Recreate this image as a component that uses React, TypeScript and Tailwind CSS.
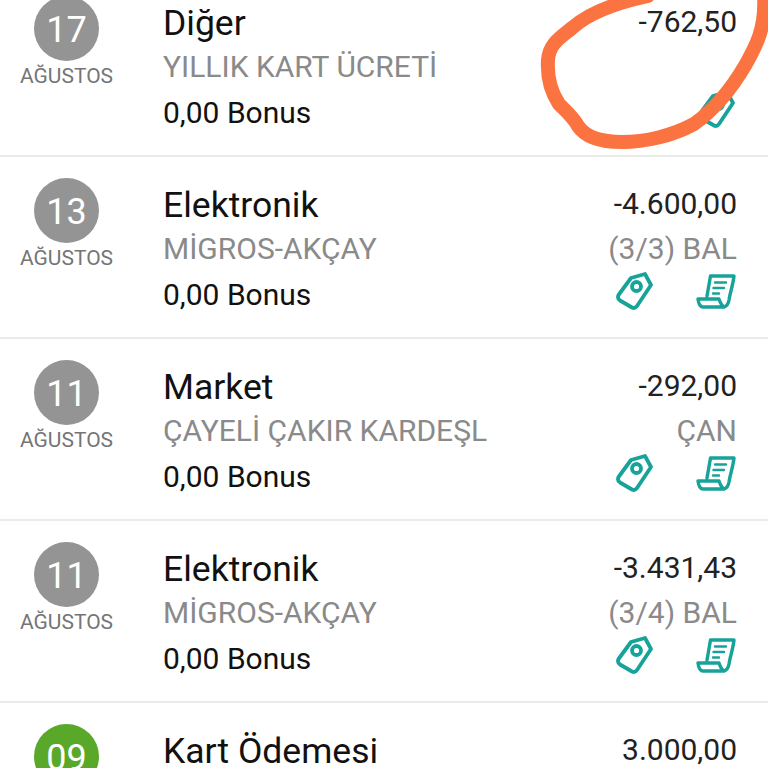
const rows = [
  { d: "17", title: "Diğer", sub: "YILLIK KART ÜCRETİ", amt: "-762,50", note: "", receipt: false },
  { d: "13", title: "Elektronik", sub: "MİGROS-AKÇAY", amt: "-4.600,00", note: "(3/3) BAL", receipt: true },
  { d: "11", title: "Market", sub: "ÇAYELİ ÇAKIR KARDEŞL", amt: "-292,00", note: "ÇAN", receipt: true },
  { d: "11", title: "Elektronik", sub: "MİGROS-AKÇAY", amt: "-3.431,43", note: "(3/4) BAL", receipt: true },
];

function Tag() {
  return (
    <svg width="38" height="40" viewBox="0 0 38 40" fill="none" stroke="#17a399" strokeWidth="3.8" strokeLinejoin="round" strokeLinecap="round">
      <path d="M2.500 24 L15 7 L29 3 L35 14 L21 35 Q19 38 16 36.500 L4 29.500 Q1 27.500 2.500 24 Z" />
      <circle cx="20.500" cy="15.500" r="4.500" />
    </svg>
  );
}

function Receipt() {
  return (
    <svg width="40" height="36" viewBox="0 0 40 36" fill="none" stroke="#17a399" strokeWidth="3.4" strokeLinejoin="round" strokeLinecap="round">
      <path d="M11 23 L14.500 3 H38 C37 12 34 20 33 27 Q32 33 28 34 H7 Q3 34 2 26 H23 Q25 32 28 34" />
      <path d="M19 9.500 H30 M17.500 15 H28 M17 20.500 H23" strokeWidth="2.400" />
    </svg>
  );
}

function Row({ r }: { r: (typeof rows)[number] }) {
  return (
    <div className="h-[182px] flex border-b-2 border-[#ebebeb] bg-white">
      <div className="w-[133px] shrink-0 flex flex-col items-center pt-[21px]">
        <div className="w-[65px] h-[65px] rounded-full bg-[#949494] text-white flex items-center justify-center pt-[3px] text-[36px] leading-none">{r.d}</div>
        <div className="text-[21px] leading-[28px] mt-[1px] text-[#757575]">AĞUSTOS</div>
      </div>
      <div className="ml-[30px] flex-1 pt-[26px]">
        <div className="text-[35.5px] leading-[44px] text-[#111]">{r.title}</div>
        <div className="text-[30px] leading-[44px] text-[#8a8a8a]">{r.sub}</div>
        <div className="text-[30px] leading-[44px] text-[#111] mt-[2px]">0,00 Bonus</div>
      </div>
      <div className="pr-[31px] pt-[25px] flex flex-col items-end">
        <div className="text-[30px] leading-[44px] text-[#222]">{r.amt}</div>
        <div className="text-[30px] leading-[44px] h-[44px] text-[#8a8a8a] mt-[1px]">{r.note}</div>
        <div className="flex items-center gap-[42px] mr-[1px]">
          <Tag />
          {r.receipt ? <Receipt /> : null}
        </div>
      </div>
    </div>
  );
}

export default function App() {
  return (
    <div className="relative w-[768px] h-[768px] overflow-hidden bg-white" style={{ fontFamily: "Roboto, sans-serif" }}>
      <div className="mt-[-25px]">
        {rows.map((r, i) => (
          <Row key={i} r={r} />
        ))}
        <div className="h-[182px] flex bg-white">
          <div className="w-[133px] shrink-0 flex flex-col items-center pt-[21px]">
            <div className="w-[65px] h-[65px] rounded-full bg-[#5aa829] text-white flex items-center justify-center pt-[3px] text-[36px] leading-none">09</div>
          </div>
          <div className="ml-[30px] flex-1 pt-[26px]">
            <div className="text-[35.5px] leading-[44px] text-[#111]">Kart Ödemesi</div>
          </div>
          <div className="pr-[31px] pt-[25px]">
            <div className="text-[30px] leading-[44px] text-[#222]">3.000,00</div>
          </div>
        </div>
      </div>
      <svg className="absolute left-0 top-0" width="768" height="768" fill="none">
        <path
          d="M648 -4 C620 2 590 12 572 28 C560 38 549 44 548 60 C547 76 551 92 559 104 C567 112 574 118 578 126 C586 138 604 142 622 142 C645 142 672 136 694 124 C714 110 732 88 746 64 C756 46 766 28 764 -4"
          stroke="#fb7340"
          strokeWidth="14"
          strokeLinecap="round"
          strokeLinejoin="round"
        />
      </svg>
    </div>
  );
}
